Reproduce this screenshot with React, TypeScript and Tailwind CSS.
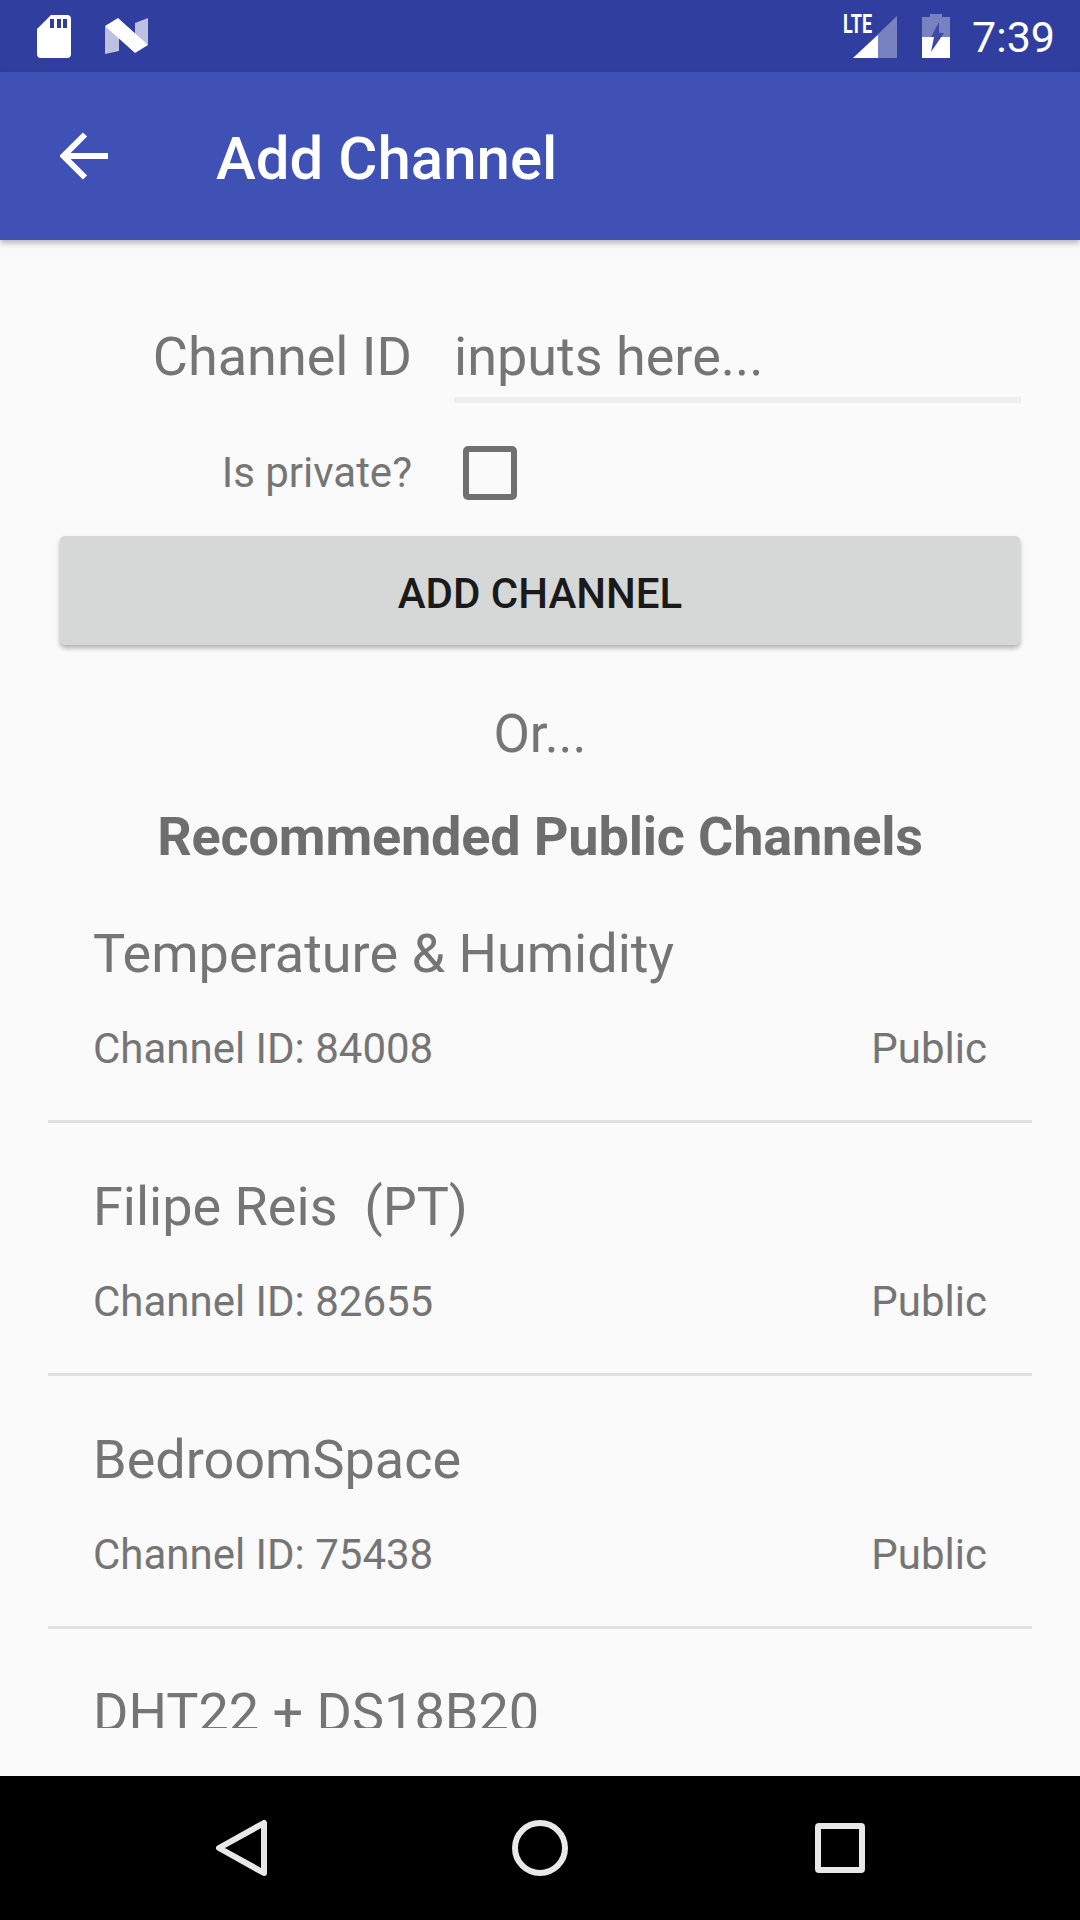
import React from 'react';

const channels: { name: string; id?: string }[] = [
  { name: 'Temperature & Humidity', id: '84008' },
  { name: 'Filipe Reis  (PT)', id: '82655' },
  { name: 'BedroomSpace', id: '75438' },
  { name: 'DHT22 + DS18B20' },
];

const StatusBar = () => (
  <div className="flex h-[72px] shrink-0 items-center bg-[#303F9F] pl-[37px] pr-[25px]">
    {/* SD card */}
    <svg width="34" height="43" viewBox="0 0 34 43" className="mt-[1px]">
      <path
        fillRule="evenodd"
        fill="#fff"
        d="M14 0H30a4 4 0 0 1 4 4V39a4 4 0 0 1-4 4H4a4 4 0 0 1-4-4V14ZM13 4V13H17V4ZM20 4V13H24V4ZM26 4V13H30V4Z"
      />
    </svg>
    {/* Nougat logo */}
    <svg width="44" height="36" viewBox="0 0 44 36" className="ml-[34px]">
      <path fill="#fff" fillOpacity="0.68" d="M0 8L14 17V33L0 36ZM30 5L43 0V27L30 18Z" />
      <path fill="#fff" d="M0 8L13 0L43 27L30 35Z" />
    </svg>
    <div className="flex-1" />
    {/* LTE signal */}
    <div className="relative h-[44px] w-[54px]">
      <span className="absolute left-[0px] top-[-2px] origin-top-left scale-x-[0.72] font-['Roboto',sans-serif] text-[25px] leading-[26px] font-bold text-white">
        LTE
      </span>
      <svg width="44" height="42" viewBox="0 0 44 42" className="absolute left-[10px] top-[2px]">
        <path fill="#fff" fillOpacity="0.35" d="M44 0V42H0Z" />
        <path fill="#fff" d="M25 19V42H0Z" />
      </svg>
    </div>
    {/* Charging battery */}
    <svg width="28" height="44" viewBox="0 0 28 44" className="ml-[25px]">
      <path fill="#fff" fillOpacity="0.35" d="M8 0H20V3H28V23H0V3H8Z" />
      <path fill="#fff" d="M0 23H28V44H0Z" />
      <path fill="#3C4AA6" d="M9 23L17 8V19H22L9 38L12 23Z" />
    </svg>
    <span className="ml-[22px] pt-[2px] font-['Roboto',sans-serif] text-[43px] leading-none text-white">7:39</span>
  </div>
);

const Toolbar = () => (
  <div className="relative z-10 flex h-[168px] shrink-0 items-center bg-[#3F51B5] shadow-[0_3px_6px_rgba(0,0,0,0.28)]">
    <svg width="48" height="48" viewBox="0 0 48 48" className="ml-[60px]" fill="none" stroke="#fff" strokeWidth="6">
      <path d="M48 24H4M25 2.5L3.5 24L25 45.5" />
    </svg>
    <h1 className="ml-[108px] pt-[5px] font-['Roboto',sans-serif] text-[60px] leading-none font-medium text-white">Add Channel</h1>
  </div>
);

const ChannelRow = ({ name, id }: { name: string; id?: string }) => (
  <div className="mx-[48px] h-[253px] shrink-0 border-b-[3px] border-[#E0E0E0] px-[45px] pt-[52px]">
    <div className="text-[54px] leading-[64px] whitespace-pre text-[#757575]">{name}</div>
    {id && (
      <div className="mt-[38px] flex justify-between text-[42px] leading-[50px] text-[#757575]">
        <span>Channel ID: {id}</span>
        <span>Public</span>
      </div>
    )}
  </div>
);

const App: React.FC = () => {
  return (
    <div className="flex h-[1920px] w-[1080px] flex-col overflow-hidden bg-[#FAFAFA] font-['Roboto',sans-serif]">
      <StatusBar />
      <Toolbar />

      <div className="flex min-h-0 flex-1 flex-col">
        {/* Form */}
        <div className="mt-[70px] flex h-[93px] shrink-0 items-start">
          <label className="w-[412px] pt-[10px] text-right text-[54px] leading-[74px] text-[#757575]">Channel ID</label>
          <div className="ml-[42px] h-[93px] w-[567px] border-b-[6px] border-[#EEEEEE] pt-[10px] text-[54px] leading-[74px] text-[#757575]">
            inputs here...
          </div>
        </div>
        <div className="mt-[43px] flex h-[54px] shrink-0 items-center">
          <label className="w-[412px] text-right text-[42px] leading-[50px] text-[#757575]">Is private?</label>
          <div className="ml-[51px] h-[54px] w-[54px] rounded-[5px] border-[6px] border-[#707070]" />
        </div>
        <button className="mx-[60px] mt-[36px] h-[109px] shrink-0 rounded-[5px] bg-[#D6D7D7] pt-[5px] text-[42px] font-medium text-[#1A1A1A] shadow-[0_3px_5px_rgba(0,0,0,0.3)]">
          ADD CHANNEL
        </button>

        <div className="mt-[61px] text-center text-[53px] leading-[56px] text-[#757575]">Or...</div>
        <div className="mt-[41px] text-center text-[54px] leading-[67px] font-bold tracking-[-0.18px] text-[#6E6E6E]">
          Recommended Public Channels
        </div>

        {/* Recommended list, cut off above the bottom padding */}
        <div className="mb-[48px] flex min-h-0 flex-1 flex-col overflow-hidden">
          {channels.map((c) => (
            <ChannelRow key={c.name} name={c.name} id={c.id} />
          ))}
        </div>
      </div>

      {/* Navigation bar */}
      <div className="flex h-[144px] shrink-0 items-center bg-black">
        <svg width="56" height="58" viewBox="0 0 56 58" className="ml-[214px]" fill="none" stroke="#E8E8E8" strokeWidth="6" strokeLinejoin="round">
          <path d="M50 4V54L5 29Z" />
        </svg>
        <svg width="56" height="56" viewBox="0 0 56 56" className="ml-[242px]" fill="none" stroke="#E8E8E8" strokeWidth="6">
          <circle cx="28" cy="28" r="25" />
        </svg>
        <svg width="50" height="50" viewBox="0 0 50 50" className="ml-[247px]" fill="none" stroke="#E8E8E8" strokeWidth="6" strokeLinejoin="round">
          <rect x="3" y="3" width="44" height="44" rx="1" />
        </svg>
      </div>
    </div>
  );
};

export default App;
